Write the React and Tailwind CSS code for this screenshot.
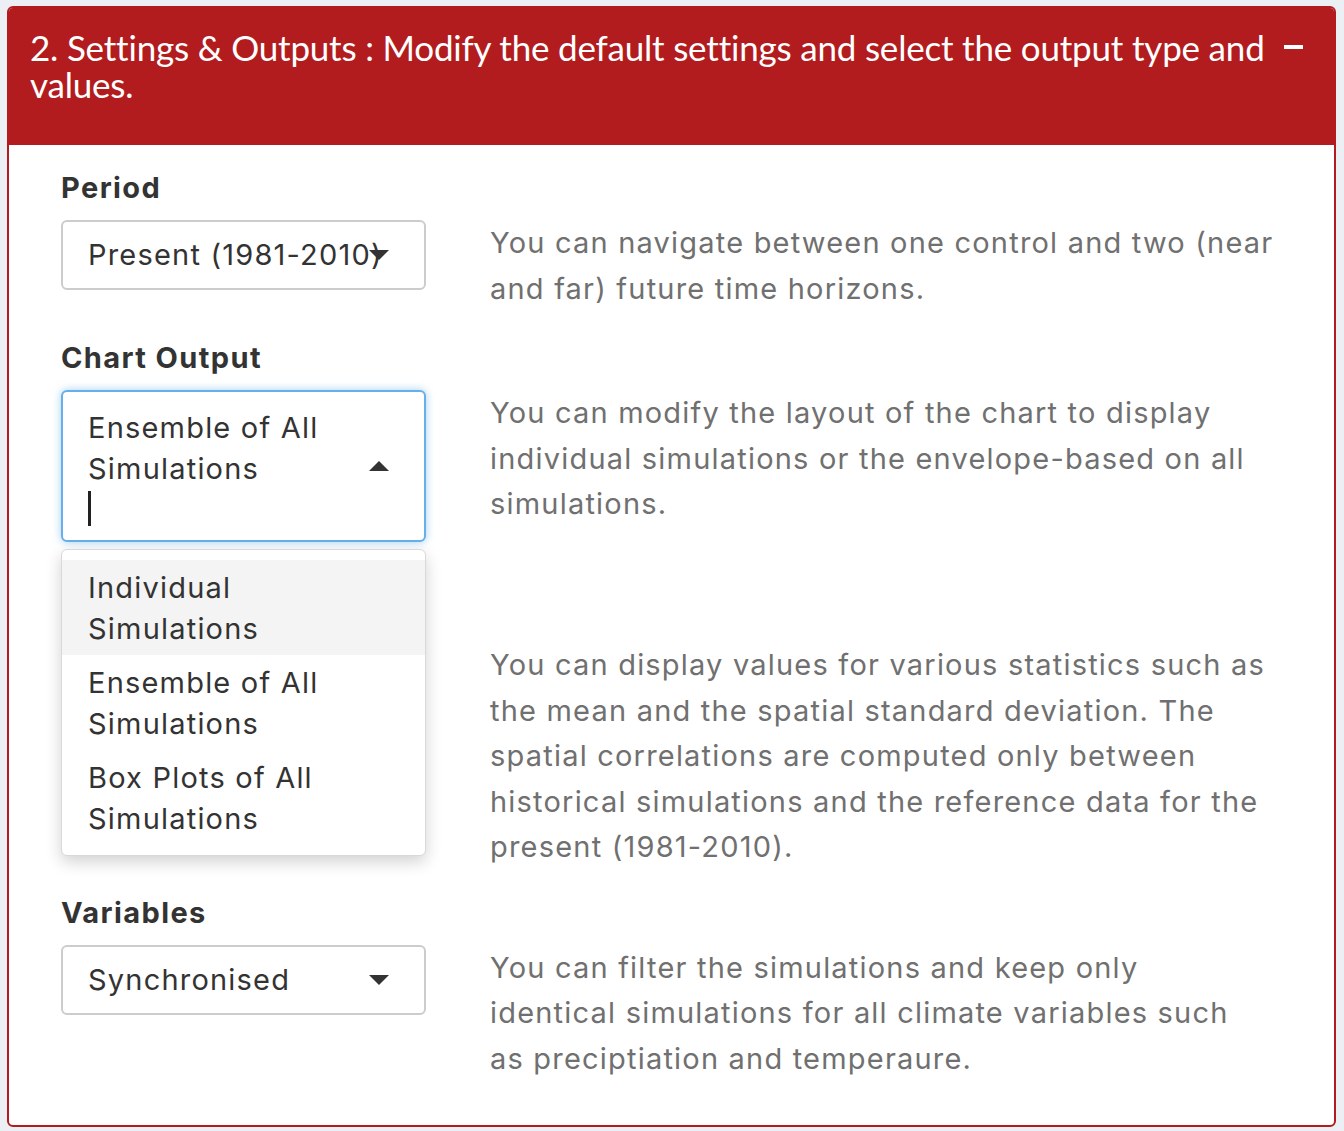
import React from 'react'

const BODY_FONT = { fontFamily: 'Inter, "Noto Sans", sans-serif' }
const HEAD_FONT = { fontFamily: 'Lato, "Noto Sans", sans-serif' }

function Caret({ up }) {
  return (
    <svg width="20" height="10" viewBox="0 0 20 10" className="absolute right-[35px]" style={{ top: 'calc(50% - 5px)' }}>
      <path d={up ? 'M0 10 L20 10 L10 0 Z' : 'M0 0 L20 0 L10 10 Z'} fill="#333" />
    </svg>
  )
}

function Select({ value }) {
  return (
    <div className="relative flex h-[70px] w-[365px] items-center rounded-[6px] border-2 border-[#cccccc] bg-white pl-[25px] text-[29px] tracking-[1.2px] text-[#333]">
      <span className="whitespace-nowrap">{value}</span>
      <Caret />
    </div>
  )
}

function Label({ children }) {
  return <div className="h-[44px] text-[29px] font-bold leading-[44px] tracking-[1.4px] text-[#333]">{children}</div>
}

function Desc({ children }) {
  return <p className="ml-[64px] pt-[54px] text-[29px] leading-[45.5px] tracking-[1.2px] text-[#707070]">{children}</p>
}

const OPTIONS = [
  ['Individual', 'Simulations'],
  ['Ensemble of All', 'Simulations'],
  ['Box Plots of All', 'Simulations'],
]

export default function App() {
  return (
    <div className="min-h-screen bg-[#ecf0f5] pb-[5px] pl-[7px] pr-[8px] pt-[6px]" style={BODY_FONT}>
      <div className="overflow-hidden rounded-[6px] border-2 border-[#b21c1e] bg-white">
        {/* header */}
        <div className="flex h-[137px] items-start justify-between bg-[#b21c1e] pl-[21px] pr-[31px] pt-[21px] text-white">
          <h3 className="text-[35px] leading-[37px] tracking-[-0.2px]" style={HEAD_FONT}>
            2. Settings &amp; Outputs : Modify the default settings and select the output type and
            <br />
            values.
          </h3>
          <div className="mt-[16px] h-[4px] w-[19px] bg-white" />
        </div>

        {/* body */}
        <div className="pb-[44px] pl-[52px] pt-[21px]">
          <div className="flex items-start">
            <div className="w-[365px]">
              <Label>Period</Label>
              <div className="mt-[10px]">
                <Select value="Present (1981-2010)" />
              </div>
            </div>
            <Desc>
              You can navigate between one control and two (near
              <br />
              and far) future time horizons.
            </Desc>
          </div>

          <div className="mt-[25px] flex items-start">
            <div className="relative w-[365px]">
              <Label>Chart Output</Label>
              <div className="relative mt-[10px] h-[152px] rounded-[6px] border-2 border-[#66afe9] bg-white pl-[25px] pt-[15px] text-[29px] leading-[41px] tracking-[1.2px] text-[#333] shadow-[0_0_8px_rgba(102,175,233,0.6)]">
                <div>Ensemble of All</div>
                <div>Simulations</div>
                <div className="mt-[2px] h-[35px] w-[3px] bg-[#222]" />
                <Caret up />
              </div>
              <div className="absolute left-0 top-[213px] z-10 w-[365px] rounded-[6px] border border-[#d9d9d9] bg-white py-[10px] text-[29px] leading-[41px] tracking-[1.2px] text-[#333] shadow-[0_6px_16px_rgba(0,0,0,0.18)]">
                {OPTIONS.map((o, i) => (
                  <div key={i} className={`h-[95px] pl-[26px] pt-[7px] ${i === 0 ? 'bg-[#f4f4f4]' : ''}`}>
                    <div>{o[0]}</div>
                    <div>{o[1]}</div>
                  </div>
                ))}
              </div>
            </div>
            <Desc>
              You can modify the layout of the chart to display
              <br />
              individual simulations or the envelope-based on all
              <br />
              simulations.
            </Desc>
          </div>

          <div className="mt-[46px] flex items-start">
            {/* hidden behind the open dropdown */}
            <div className="invisible w-[365px]">
              <Label>Statistics</Label>
              <div className="mt-[10px]">
                <Select value="Mean" />
              </div>
            </div>
            <Desc>
              You can display values for various statistics such as
              <br />
              the mean and the spatial standard deviation. The
              <br />
              spatial correlations are computed only between
              <br />
              historical simulations and the reference data for the
              <br />
              present (1981-2010).
            </Desc>
          </div>

          <div className="mt-[21px] flex items-start">
            <div className="w-[365px]">
              <Label>Variables</Label>
              <div className="mt-[10px]">
                <Select value="Synchronised" />
              </div>
            </div>
            <Desc>
              You can filter the simulations and keep only
              <br />
              identical simulations for all climate variables such
              <br />
              as preciptiation and temperaure.
            </Desc>
          </div>
        </div>
      </div>
    </div>
  )
}
